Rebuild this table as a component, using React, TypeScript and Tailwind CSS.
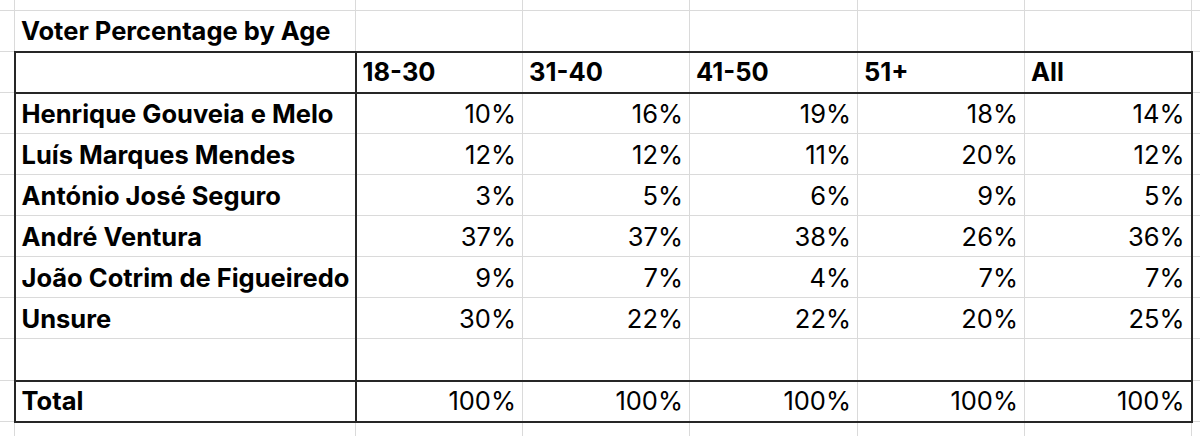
import { clsx } from "clsx"

const AGES = ["18-30", "31-40", "41-50", "51+", "All"]

const ROWS: [string, string[]][] = [
  ["Henrique Gouveia e Melo", ["10%", "16%", "19%", "18%", "14%"]],
  ["Luís Marques Mendes", ["12%", "12%", "11%", "20%", "12%"]],
  ["António José Seguro", ["3%", "5%", "6%", "9%", "5%"]],
  ["André Ventura", ["37%", "37%", "38%", "26%", "36%"]],
  ["João Cotrim de Figueiredo", ["9%", "7%", "4%", "7%", "7%"]],
  ["Unsure", ["30%", "22%", "22%", "20%", "25%"]],
]

const cell = "border border-[#dadada] px-[6px] pb-[7px] align-bottom whitespace-nowrap overflow-hidden"
// label column: thick dark rule on both sides
const label = "border-l-2 border-l-[#262626] border-r-2 border-r-[#262626]"
const lastCol = "border-r-2 border-r-[#262626]"

function Spacer({ cols }: { cols: number }) {
  return (
    <>
      {Array.from({ length: cols }).map((_, i) => (
        <td key={i} className={cell} />
      ))}
    </>
  )
}

export default function App() {
  return (
    <div className="h-[436px] w-[1200px] overflow-hidden bg-white font-['Inter',sans-serif] text-[25.5px] leading-none text-black">
      <table className="-mt-[1px] -ml-[1px] w-[1220px] table-fixed border-collapse">
        <colgroup>
          <col className="w-[15px]" />
          <col className="w-[341px]" />
          <col className="w-[167px]" />
          <col className="w-[167px]" />
          <col className="w-[168px]" />
          <col className="w-[167px]" />
          <col className="w-[167px]" />
          <col className="w-[28px]" />
        </colgroup>
        <tbody>
          <tr className="h-[11px]">
            <Spacer cols={8} />
          </tr>
          <tr className="h-[41px]">
            <td className={cell} />
            <td className={clsx(cell, "font-bold")}>Voter Percentage by Age</td>
            <Spacer cols={6} />
          </tr>
          <tr className="h-[41px]">
            <td className={cell} />
            <td className={clsx(cell, label, "border-t-2 border-t-[#262626] border-b-2 border-b-[#262626]")} />
            {AGES.map((a, i) => (
              <td
                key={a}
                className={clsx(
                  cell,
                  "font-bold border-t-2 border-t-[#262626] border-b-2 border-b-[#262626]",
                  i === AGES.length - 1 && lastCol
                )}
              >
                {a}
              </td>
            ))}
            <td className={cell} />
          </tr>
          {ROWS.map(([name, vals]) => (
            <tr key={name} className="h-[41px]">
              <td className={cell} />
              <td className={clsx(cell, label, "font-bold")}>{name}</td>
              {vals.map((v, i) => (
                <td key={i} className={clsx(cell, "text-right", i === vals.length - 1 && lastCol)}>
                  {v}
                </td>
              ))}
              <td className={cell} />
            </tr>
          ))}
          <tr className="h-[42px]">
            <td className={cell} />
            <td className={clsx(cell, label, "border-b-2 border-b-[#262626]")} />
            {AGES.map((a, i) => (
              <td
                key={a}
                className={clsx(cell, "border-b-2 border-b-[#262626]", i === AGES.length - 1 && lastCol)}
              />
            ))}
            <td className={cell} />
          </tr>
          <tr className="h-[41px]">
            <td className={cell} />
            <td className={clsx(cell, label, "border-b-2 border-b-[#262626] font-bold")}>Total</td>
            {AGES.map((a, i) => (
              <td
                key={a}
                className={clsx(
                  cell,
                  "text-right border-b-2 border-b-[#262626]",
                  i === AGES.length - 1 && lastCol
                )}
              >
                100%
              </td>
            ))}
            <td className={cell} />
          </tr>
          <tr className="h-[20px]">
            <Spacer cols={8} />
          </tr>
        </tbody>
      </table>
    </div>
  )
}
